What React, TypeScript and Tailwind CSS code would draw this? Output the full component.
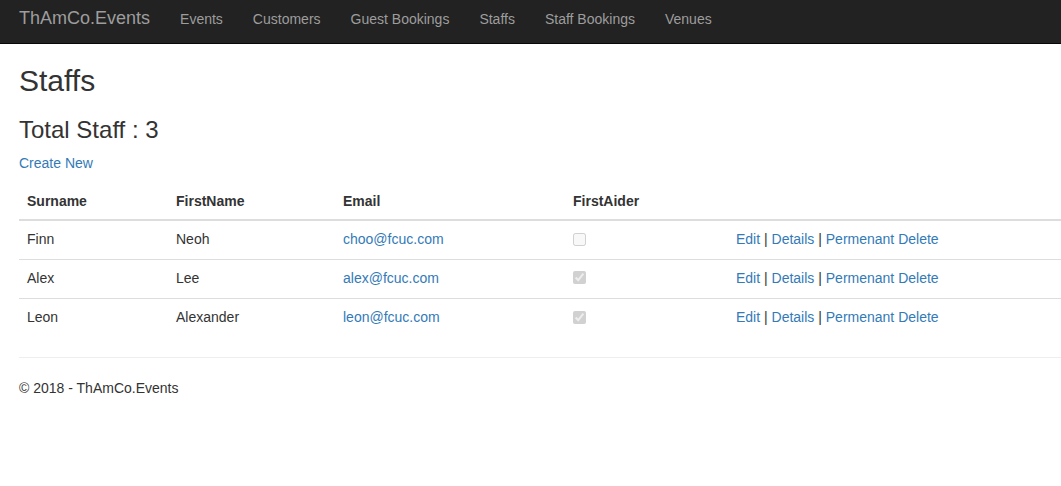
const navLinks = ['Events', 'Customers', 'Guest Bookings', 'Staffs', 'Staff Bookings', 'Venues'];

const staff = [
  { surname: 'Finn', firstName: 'Neoh', email: 'choo@fcuc.com', firstAider: false },
  { surname: 'Alex', firstName: 'Lee', email: 'alex@fcuc.com', firstAider: true },
  { surname: 'Leon', firstName: 'Alexander', email: 'leon@fcuc.com', firstAider: true },
];

function App() {
  return (
    <div className="min-h-screen bg-white text-[14px] leading-[20px] text-[#333]" style={{ fontFamily: '"Liberation Sans", Arial, sans-serif' }}>
      <nav className="h-[44px] bg-[#222] border-b border-[#080808]">
        <div className="flex items-start pl-[19px]">
          <a href="#" className="pt-[8px] pr-[15px] text-[18px] leading-[20px] text-[#9d9d9d]">ThAmCo.Events</a>
          <ul className="flex">
            {navLinks.map((l) => (
              <li key={l}>
                <a href="#" className="block px-[15px] pt-[9px] text-[14px] leading-[20px] text-[#9d9d9d]">{l}</a>
              </li>
            ))}
          </ul>
        </div>
      </nav>

      <div className="pl-[19px]">
        <h2 className="mt-[20px] mb-[10px] text-[30px] leading-[33px] font-normal">Staffs</h2>
        <h3 className="mt-[20px] mb-[10px] text-[24px] leading-[26.4px] font-normal">Total Staff : 3</h3>
        <p className="mb-[10px]">
          <a href="#" className="text-[#337ab7]">Create New</a>
        </p>

        <table className="w-full table-fixed border-collapse mb-[20px]">
          <thead>
            <tr>
              <th className="w-[149px] p-[8px] text-left font-bold border-b-2 border-[#ddd]">Surname</th>
              <th className="w-[167px] p-[8px] text-left font-bold border-b-2 border-[#ddd]">FirstName</th>
              <th className="w-[230px] p-[8px] text-left font-bold border-b-2 border-[#ddd]">Email</th>
              <th className="w-[163px] p-[8px] text-left font-bold border-b-2 border-[#ddd]">FirstAider</th>
              <th className="p-[8px] border-b-2 border-[#ddd]"></th>
            </tr>
          </thead>
          <tbody>
            {staff.map((s, i) => (
              <tr key={s.email} className={i > 0 ? 'border-t border-[#ddd]' : ''}>
                <td className="h-[39px] px-[8px] pb-[2px] align-middle">{s.surname}</td>
                <td className="px-[8px] pb-[2px] align-middle">{s.firstName}</td>
                <td className="px-[8px] pb-[2px] align-middle">
                  <a href="#" className="text-[#337ab7]">{s.email}</a>
                </td>
                <td className="px-[8px] pb-[2px] align-middle">
                  <input type="checkbox" disabled checked={s.firstAider} readOnly className="block w-[13px] h-[13px] m-0" />
                </td>
                <td className="px-[8px] pb-[2px] align-middle">
                  <a href="#" className="text-[#337ab7]">Edit</a> |{' '}
                  <a href="#" className="text-[#337ab7]">Details</a> |{' '}
                  <a href="#" className="text-[#337ab7]">Permenant Delete</a>
                </td>
              </tr>
            ))}
          </tbody>
        </table>

        <hr className="border-t border-[#eee] my-0" />
        <footer className="pt-[20px]">
          <p>&copy; 2018 - ThAmCo.Events</p>
        </footer>
      </div>
    </div>
  );
}

export default App;
